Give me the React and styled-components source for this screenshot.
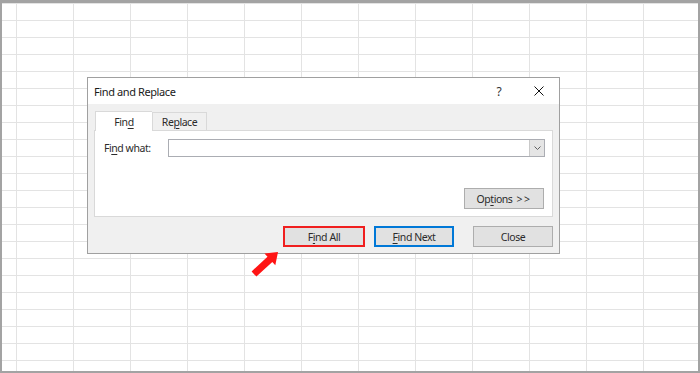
import React from 'react';
import styled, { createGlobalStyle } from 'styled-components';

const GlobalStyle = createGlobalStyle`
  html, body {
    margin: 0;
    padding: 0;
    background: #ffffff;
  }
  body {
    font-family: "Noto Sans", "Open Sans", sans-serif;
  }
`;

const Sheet = styled.div`
  position: relative;
  width: 700px;
  height: 373px;
  box-sizing: border-box;
  border: 2px solid #a3a3a3;
  border-top-width: 3px;
  background-color: #ffffff;
  background-image:
    linear-gradient(to right, #e3e3e3 1px, transparent 1px),
    linear-gradient(to bottom, #e3e3e3 1px, transparent 1px);
  background-size: 57px 100%, 100% 17px;
  background-position: 14px 0, 0 0;
  overflow: hidden;
`;

const Dialog = styled.div`
  position: absolute;
  left: 85px;
  top: 74px;
  width: 473px;
  height: 177px;
  box-sizing: border-box;
  border: 1px solid #a0a0a0;
  background: #f0f0f0;
  display: flex;
  flex-direction: column;
  font-size: 10.5px;
  letter-spacing: -0.45px;
  color: #2b2b2b;
`;

const TitleBar = styled.div`
  height: 26px;
  flex: none;
  display: flex;
  align-items: center;
  background: #ffffff;
  padding-left: 6px;
`;

const Title = styled.div`
  flex: 1;
  font-size: 11px;
  letter-spacing: -0.4px;
  color: #1a1a1a;
`;

const TitleButton = styled.div`
  width: 40px;
  height: 26px;
  display: flex;
  align-items: center;
  justify-content: center;
  font-size: 12px;
  color: #333;
`;

const Body = styled.div`
  flex: 1;
  display: flex;
  flex-direction: column;
  padding: 7px 6px 6px 6px;
`;

const Tabs = styled.div`
  display: flex;
  align-items: flex-end;
  margin-left: 1px;
  height: 19px;
`;

const Tab = styled.div`
  box-sizing: border-box;
  width: ${p => (p.$active ? 57 : 55)}px;
  height: ${p => (p.$active ? 20 : 18)}px;
  display: flex;
  align-items: center;
  justify-content: center;
  border: 1px solid #d9d9d9;
  border-bottom: none;
  background: ${p => (p.$active ? '#ffffff' : '#f0f0f0')};
  margin-bottom: ${p => (p.$active ? -1 : 0)}px;
  position: relative;
  z-index: ${p => (p.$active ? 1 : 0)};
  ${p => p.$active && 'border-right: none;'}
`;

const Panel = styled.div`
  height: 87px;
  box-sizing: border-box;
  border: 1px solid #d9d9d9;
  background: #ffffff;
  display: flex;
  flex-direction: column;
  justify-content: space-between;
  padding: 8px 7px 7px 9px;
`;

const FieldRow = styled.div`
  display: flex;
  align-items: center;
  height: 18px;
`;

const Label = styled.div`
  width: 64px;
  flex: none;
`;

const Combo = styled.div`
  flex: 1;
  height: 18px;
  box-sizing: border-box;
  border: 1px solid #abadb3;
  display: flex;
  justify-content: flex-end;
  background: #ffffff;
`;

const ComboArrow = styled.div`
  width: 15px;
  box-sizing: border-box;
  background: #e5e5e5;
  border-left: 1px solid #c9c9c9;
  display: flex;
  align-items: center;
  justify-content: center;
`;

const OptionsRow = styled.div`
  display: flex;
  justify-content: flex-end;
  padding-right: 1px;
`;

const Button = styled.div`
  box-sizing: border-box;
  width: ${p => p.$width || 80}px;
  height: 21px;
  display: flex;
  align-items: center;
  justify-content: center;
  background: #e1e1e1;
  border: ${p => (p.$highlight ? '2px solid #f01f1f' : p.$focused ? '1px solid #0078d7' : '1px solid #adadad')};
  ${p => p.$focused && 'box-shadow: inset 0 0 0 1px #0078d7;'}
`;

const Chevrons = styled.span`
  margin-left: 4px;
  letter-spacing: 1.5px;
`;

const ButtonRow = styled.div`
  display: flex;
  justify-content: flex-end;
  margin-top: 9px;
`;

const Gap = styled.div`
  width: ${p => p.$size}px;
  flex: none;
`;

const Key = styled.span`
  text-decoration: underline;
  text-underline-offset: 2px;
`;

const Arrow = styled.svg`
  position: absolute;
  left: 246px;
  top: 247px;
`;

export default function App() {
  return (
    <>
      <GlobalStyle />
      <Sheet>
        <Dialog>
          <TitleBar>
            <Title>Find and Replace</Title>
            <TitleButton>?</TitleButton>
            <TitleButton>
              <svg width="10" height="10" viewBox="0 0 10 10">
                <path d="M0.5 0.5 L9.5 9.5 M9.5 0.5 L0.5 9.5" stroke="#111" strokeWidth="1" fill="none" />
              </svg>
            </TitleButton>
          </TitleBar>
          <Body>
            <Tabs>
              <Tab $active>Fin<Key>d</Key></Tab>
              <Tab>Re<Key>p</Key>lace</Tab>
            </Tabs>
            <Panel>
              <FieldRow>
                <Label>Fi<Key>n</Key>d what:</Label>
                <Combo>
                  <ComboArrow>
                    <svg width="7" height="4" viewBox="0 0 7 4">
                      <path d="M0.5 0.5 L3.5 3.5 L6.5 0.5" stroke="#606060" strokeWidth="1" fill="none" />
                    </svg>
                  </ComboArrow>
                </Combo>
              </FieldRow>
              <OptionsRow>
                <Button>Op<Key>t</Key>ions<Chevrons>&gt;&gt;</Chevrons></Button>
              </OptionsRow>
            </Panel>
            <ButtonRow>
              <Button $width={82} $highlight>F<Key>i</Key>nd All</Button>
              <Gap $size={9} />
              <Button $focused><Key>F</Key>ind Next</Button>
              <Gap $size={19} />
              <Button>Close</Button>
            </ButtonRow>
          </Body>
        </Dialog>
        <Arrow width="34" height="32" viewBox="0 0 34 32">
          <polygon
            points="30,2 16.5,3.5 19.5,6.8 3.6,21.4 8.4,26.6 24.3,12 27.3,15.3"
            fill="#ff1414"
          />
        </Arrow>
      </Sheet>
    </>
  );
}
